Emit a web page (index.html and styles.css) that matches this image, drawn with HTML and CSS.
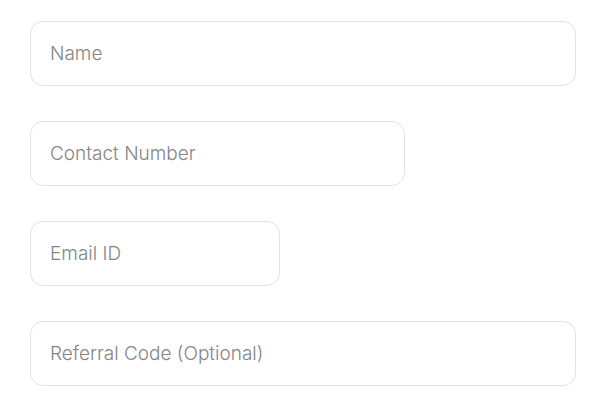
FILE: index.html
```html
<!DOCTYPE html>
<html>
<head>
<meta charset="utf-8">
<link rel="stylesheet" href="styles.css">
</head>
<body>
<form class="form">
  <input class="field field-full" type="text" placeholder="Name">
  <input class="field field-md" type="text" placeholder="Contact Number">
  <input class="field field-sm" type="text" placeholder="Email ID">
  <input class="field field-full" type="text" placeholder="Referral Code (Optional)">
</form>
</body>
</html>
```

FILE: styles.css
```css
html, body {
  margin: 0;
  background: #ffffff;
}
body {
  padding: 21px 0 0 30px;
  font-family: "Inter", "Roboto", "Liberation Sans", sans-serif;
}
.form {
  display: flex;
  flex-direction: column;
  align-items: flex-start;
  gap: 35px;
}
.field {
  box-sizing: border-box;
  height: 65px;
  border: 1px solid #e2e2e2;
  border-radius: 13px;
  padding: 0 19px 1px;
  font-family: inherit;
  font-size: 19px;
  font-weight: 300;
  color: #555;
  background: #fff;
  outline: none;
}
.field::placeholder {
  color: #858585;
  opacity: 1;
}
.field-full { width: 546px; }
.field-md { width: 375px; }
.field-sm { width: 250px; }
```
